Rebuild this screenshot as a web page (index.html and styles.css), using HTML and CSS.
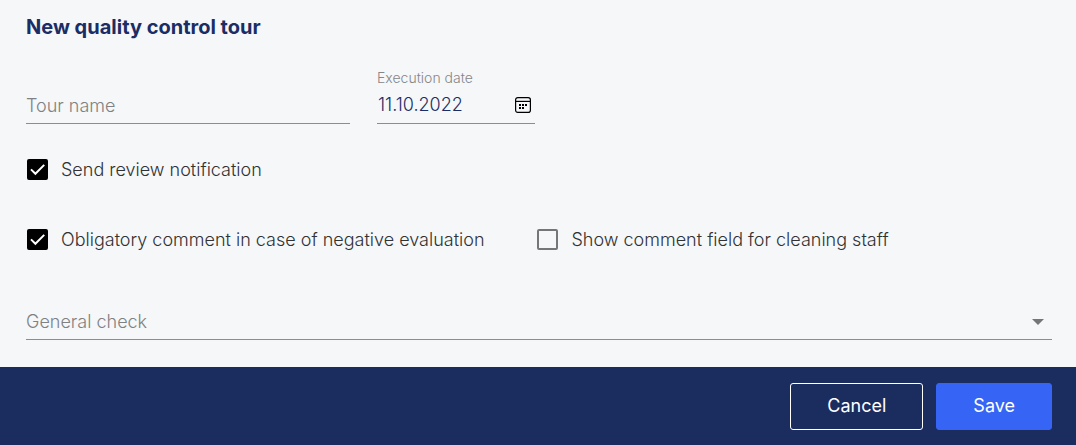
FILE: index.html
```html
<!DOCTYPE html>
<html lang="en">
<head>
<meta charset="utf-8">
<meta name="viewport" content="width=device-width, initial-scale=1">
<title>New quality control tour</title>
<link rel="stylesheet" href="styles.css">
</head>
<body>
<form class="dialog">
  <main class="dialog-body">
    <h1 class="title">New quality control tour</h1>
    <div class="fields">
      <div class="field">
        <input class="control" type="text" placeholder="Tour name" aria-label="Tour name">
      </div>
      <div class="field field-date">
        <label class="field-label" for="date">Execution date</label>
        <div class="date-row">
          <input class="control control-date" id="date" type="text" value="11.10.2022">
          <button class="calendar-button" type="button" aria-label="Open calendar">
            <svg class="calendar-icon" width="18" height="18" viewBox="0 0 18 18" aria-hidden="true">
              <rect x="1.6" y="1.6" width="14.8" height="14.8" rx="2.2" fill="none" stroke="#000" stroke-width="1.2"/>
              <path d="M2 5.4H16" stroke="#000" stroke-width="1.2"/>
              <path d="M8 8h2v2H8zM11 8h2v2h-2zM5 8h2v2H5zM5 11h2v2H5zM8 11h2v2H8z"/>
            </svg>
          </button>
        </div>
      </div>
    </div>
    <div class="checks">
      <label class="check"><input class="box" type="checkbox" checked><svg class="tick" viewBox="0 0 24 24" aria-hidden="true"><path d="M2.8 11.8 9 18 21.5 5.5" fill="none" stroke="#fff" stroke-width="2.8"/></svg><span>Send review notification</span></label>
    </div>
    <div class="checks">
      <label class="check"><input class="box" type="checkbox" checked><svg class="tick" viewBox="0 0 24 24" aria-hidden="true"><path d="M2.8 11.8 9 18 21.5 5.5" fill="none" stroke="#fff" stroke-width="2.8"/></svg><span>Obligatory comment in case of negative evaluation</span></label>
      <label class="check"><input class="box" type="checkbox"><svg class="tick" viewBox="0 0 24 24" aria-hidden="true"><path d="M2.8 11.8 9 18 21.5 5.5" fill="none" stroke="#fff" stroke-width="2.8"/></svg><span>Show comment field for cleaning staff</span></label>
    </div>
    <div class="field field-select">
      <select class="control control-select" aria-label="Check type">
        <option>General check</option>
      </select>
      <svg class="arrow" width="12" height="6" viewBox="0 0 12 6" aria-hidden="true"><path d="M0 0h12L6 6z" fill="#757677"/></svg>
    </div>
  </main>
  <footer class="actions">
    <button class="button button-outline" type="button">Cancel</button>
    <button class="button button-primary" type="submit">Save</button>
  </footer>
</form>
</body>
</html>
```
FILE: styles.css
```css
* { box-sizing: border-box; }

body {
  margin: 0;
  background: #f5f7f9;
  color: #313234;
  font-family: Inter, "Liberation Sans", sans-serif;
  font-size: 18px;
  font-weight: 300;
  line-height: 24px;
}

.dialog {
  display: flex;
  flex-direction: column;
  min-height: 100vh;
}

.dialog-body {
  flex: 1;
  padding: 15px 24px 27px 26px;
}

.title {
  margin: 0;
  color: #1b2d64;
  font-size: 20px;
  font-weight: 700;
  line-height: 24px;
}

.fields {
  display: grid;
  grid-template-columns: 2fr 1fr 3fr;
  align-items: end;
  gap: 27px;
  margin-top: 31px;
}

.field {
  border-bottom: 1px solid #8c8d8f;
}

.field-date { max-width: 158px; }

.field-label {
  display: block;
  color: #858688;
  font-size: 14px;
  line-height: 16px;
}

.control {
  display: block;
  width: 100%;
  height: 37px;
  padding: 2px 0 0;
  border: 0;
  border-radius: 0;
  outline: 0;
  background: transparent;
  color: #808183;
  font: inherit;
}

.control::placeholder {
  color: #808183;
  opacity: 1;
}

.date-row {
  display: flex;
  align-items: center;
}

.control-date {
  flex: 1;
  min-width: 0;
  padding: 0 0 0 1px;
  color: #1b2d64;
}

.calendar-button {
  display: flex;
  padding: 3px;
  border: 0;
  background: transparent;
}

.checks {
  display: flex;
  flex-wrap: wrap;
  gap: 52px;
  margin-top: 46px;
}

.fields + .checks { margin-top: 34px; }

.check {
  display: grid;
  grid-template-columns: 23px auto;
  align-items: center;
  column-gap: 12px;
}

.box {
  grid-area: 1 / 1;
  justify-self: center;
  width: 21px;
  height: 21px;
  margin: 0 0 2px;
  appearance: none;
  border: 2px solid #757677;
  border-radius: 2px;
}

.box:checked {
  border-color: #000;
  background: #000;
}

.tick {
  grid-area: 1 / 1;
  justify-self: center;
  width: 17px;
  height: 17px;
  margin-bottom: 2px;
  visibility: hidden;
  pointer-events: none;
}

.box:checked + .tick { visibility: visible; }

.field-select {
  display: grid;
  align-items: center;
  margin-top: 50px;
}

.control-select {
  grid-area: 1 / 1;
  appearance: none;
}

.arrow {
  grid-area: 1 / 1;
  justify-self: end;
  margin: 2px 8px 0 0;
  pointer-events: none;
}

.actions {
  display: flex;
  justify-content: flex-end;
  gap: 13px;
  padding: 16px 24px 15px;
  background: #1b2d5f;
}

.button {
  padding: 10px 36px 11px;
  border: 1px solid #fff;
  border-radius: 3px;
  background: transparent;
  color: #fff;
  font: inherit;
  font-weight: 400;
}

.button-primary {
  border-color: #3664f4;
  background: #3664f4;
}
```
